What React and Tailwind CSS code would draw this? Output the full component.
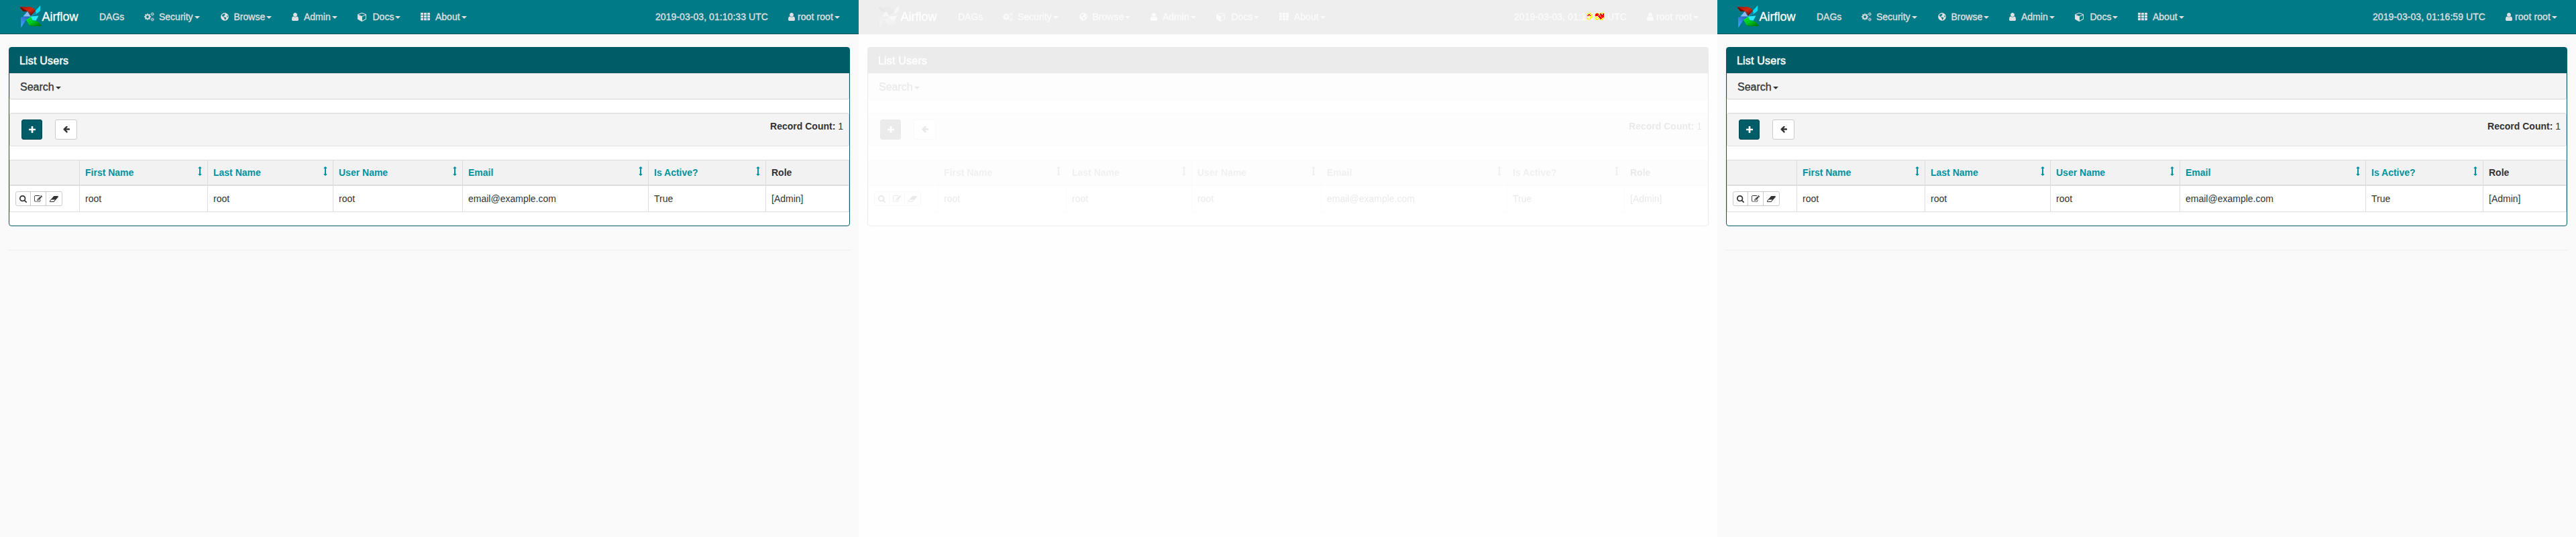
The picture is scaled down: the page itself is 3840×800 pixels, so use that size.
import React from 'react';
import { FaGlobeAmericas } from 'react-icons/fa';

const PATHS = {
  user: 'M1536 1399q0 109-62.5 187t-150.5 78h-854q-88 0-150.5-78t-62.5-187q0-85 8.5-160.5t31.5-152 58.5-131 94-89 134.5-34.5q131 128 313 128t313-128q76 0 134.5 34.5t94 89 58.5 131 31.5 152 8.5 160.5zm-256-887q0 159-112.5 271.5t-271.5 112.5-271.5-112.5-112.5-271.5 112.5-271.5 271.5-112.5 271.5 112.5 112.5 271.5z',
  plus: 'M1600 736v192q0 40-28 68t-68 28h-416v416q0 40-28 68t-68 28h-192q-40 0-68-28t-28-68v-416h-416q-40 0-68-28t-28-68v-192q0-40 28-68t68-28h416v-416q0-40 28-68t68-28h192q40 0 68 28t28 68v416h416q40 0 68 28t28 68z',
  left: 'M1664 896v128q0 53-32.5 90.5t-84.5 37.5h-704l293 294q38 36 38 90t-38 90l-75 76q-37 37-90 37-52 0-91-37l-651-652q-37-37-37-90 0-52 37-91l651-650q38-38 91-38 52 0 90 38l75 74q38 38 38 91t-38 91l-293 293h704q52 0 84.5 37.5t32.5 90.5z',
  search: 'M1216 832q0-185-131.5-316.5t-316.5-131.5-316.5 131.5-131.5 316.5 131.5 316.5 316.5 131.5 316.5-131.5 131.5-316.5zm512 832q0 52-38 90t-90 38q-54 0-90-38l-343-342q-179 124-399 124-143 0-273.5-55.5t-225-150-150-225-55.5-273.5 55.5-273.5 150-225 225-150 273.5-55.5 273.5 55.5 225 150 150 225 55.5 273.5q0 220-124 399l343 343q37 37 37 90z',
  edit: 'M888 1184l116-116-152-152-116 116v56h96v96h56zm440-720q-16-16-33 1l-350 350q-17 17-1 33t33-1l350-350q17-17 1-33zm80 594v190q0 119-84.5 203.5t-203.5 84.5h-832q-119 0-203.5-84.5t-84.5-203.5v-832q0-119 84.5-203.5t203.5-84.5h832q63 0 117 25 15 7 18 23 3 17-9 29l-49 49q-14 14-32 8-23-6-45-6h-832q-66 0-113 47t-47 113v832q0 66 47 113t113 47h832q66 0 113-47t47-113v-126q0-13 9-22l64-64q15-15 35-7t20 29zm-96-738l288 288-672 672h-288v-288zm444 132l-92 92-288-288 92-92q28-28 68-28t68 28l152 152q28 28 28 68t-28 68z',
  eraser: 'M832 1408l336-384h-768l-336 384h768zm1013-1077q15 34 9.5 71.5t-30.5 65.5l-896 1024q-38 44-96 44h-768q-38 0-69.5-20.5t-47.5-54.5q-15-34-9.5-71.5t30.5-65.5l896-1024q38-44 96-44h768q38 0 69.5 20.5t47.5 54.5z',
  cube: 'M896 1629l640-349v-636l-640 233v752zm-64-865l698-254-698-254-698 254 698 254zm832-252v768q0 35-18 65t-49 47l-704 384q-28 16-61 16t-61-16l-704-384q-31-17-49-47t-18-65v-768q0-40 23-73t61-47l704-256q22-8 44-8t44 8l704 256q38 14 61 47t23 73z',
  updown: 'M1216 320q0 26-19 45t-45 19h-128v1024h128q26 0 45 19t19 45-19 45l-256 256q-19 19-45 19t-45-19l-256-256q-19-19-19-45t19-45 45-19h128v-1024h-128q-26 0-45-19t-19-45 19-45l256-256q19-19 45-19t45 19l256 256q19 19 19 45z',
};

function Glyph({ name, box, className }) {
  return (
    <svg viewBox={box} className={`shrink-0 ${className}`} fill="currentColor">
      <path d={PATHS[name]} />
    </svg>
  );
}

function Caret({ className = '' }) {
  return (
    <span
      className={`inline-block h-0 w-0 border-x-4 border-t-4 border-x-transparent border-t-current ${className}`}
    />
  );
}

function GridIcon() {
  return (
    <svg viewBox="0 0 14 12" className="h-3 w-3.5" fill="currentColor">
      {[0, 4, 8].map((y) =>
        [0, 5, 10].map((x) => <rect key={`${x}-${y}`} x={x} y={y} width="4" height="3.2" rx="0.5" />)
      )}
    </svg>
  );
}

/* One large gear with two small ones to its right; teeth are a dashed ring. */
function CogsIcon() {
  return (
    <svg viewBox="0 0 15 14" className="h-3.5 w-[15px]" fill="none" stroke="currentColor">
      <circle cx="5" cy="7" r="2.9" strokeWidth="1.9" />
      <circle cx="5" cy="7" r="4.3" strokeWidth="1.3" pathLength="16" strokeDasharray="1 1" strokeDashoffset="0.5" />
      <circle cx="12.2" cy="3" r="1.4" strokeWidth="0.9" />
      <circle cx="12.2" cy="3" r="2.2" strokeWidth="0.9" pathLength="12" strokeDasharray="1 1" strokeDashoffset="0.5" />
      <circle cx="12.2" cy="11" r="1.4" strokeWidth="0.9" />
      <circle cx="12.2" cy="11" r="2.2" strokeWidth="0.9" pathLength="12" strokeDasharray="1 1" strokeDashoffset="0.5" />
    </svg>
  );
}

function Pinwheel({ id }) {
  return (
    <svg viewBox="0 0 34 34" className="h-[34px] w-[34px] shrink-0">
      <defs>
        <linearGradient id={`${id}-red`} x1="0" y1="0" x2="1" y2="1">
          <stop offset="0" stopColor="#a01208" />
          <stop offset="0.5" stopColor="#d42a10" />
          <stop offset="1" stopColor="#3a0c08" />
        </linearGradient>
        <linearGradient id={`${id}-green`} x1="0" y1="0" x2="1" y2="1">
          <stop offset="0" stopColor="#00ef3c" />
          <stop offset="0.5" stopColor="#00c41c" />
          <stop offset="1" stopColor="#006a08" />
        </linearGradient>
        <linearGradient id={`${id}-blue`} x1="0" y1="1" x2="0.6" y2="0">
          <stop offset="0" stopColor="#3fb0ff" />
          <stop offset="1" stopColor="#2f63c8" />
        </linearGradient>
      </defs>
      <path d="M31.2 0V8L25 13 16.5 16.5 23.5 8.5Z" fill="#00dcf4" />
      <path d="M24 8.5 25 13 16.5 16.5Z" fill="#0a86a4" />
      <path d="M0.3 2.3H15.5Q22 3 24 8.5L17 15.5 12.5 9H5.5Z" fill={`url(#${id}-red)`} />
      <path d="M0.3 2.3 12.5 9H5.5Z" fill="#6e0a06" />
      <path d="M16.5 16.5 28.5 15.5 24.5 22.8 18 22Z" fill="#2ce8ff" />
      <path d="M16.5 16.5 10 21.5 14.5 29.5 19.5 31H33L28.5 24.5 20 22.5Z" fill={`url(#${id}-green)`} />
      <path d="M14.5 29.5 33 31H17Z" fill="#00860a" />
      <path d="M2 17.5 16.5 16.5 10 21.5 2.3 33.2Z" fill={`url(#${id}-blue)`} />
      <path d="M5.5 16.5 12 9 16.5 16.5Z" fill="#8fb8f6" />
    </svg>
  );
}

const NAV = [
  { label: 'DAGs', width: 'w-[66.5px]' },
  { label: 'Security', width: 'w-[114px]', slot: 'w-[22.5px]', icon: <CogsIcon /> },
  { label: 'Browse', width: 'w-[106.5px]', slot: 'w-[20px]', icon: <FaGlobeAmericas className="h-3 w-3" /> },
  {
    label: 'Admin',
    width: 'w-[98px]',
    slot: 'w-[18px]',
    icon: <Glyph name="user" box="256 128 1280 1536" className="h-3 w-2.5" />,
  },
  {
    label: 'Docs',
    width: 'w-[94px]',
    slot: 'w-[22.5px]',
    icon: <Glyph name="cube" box="0 0 1664 1792" className="h-3.5 w-[13px]" />,
  },
  { label: 'About', width: 'w-[80px]', slot: 'w-[22px]', icon: <GridIcon /> },
];

function Navbar({ id, time }) {
  return (
    <nav className="flex h-[51px] items-center border-b border-[#004f58] bg-[#007a87] pr-7 pl-[29px] text-sm leading-5 text-[#e0e0e0] [-webkit-text-stroke:0.3px]">
      <div className="flex w-[119px] items-center">
        <Pinwheel id={id} />
        <span className="-ml-[0.5px] text-lg leading-5 text-white">Airflow</span>
      </div>
      {NAV.map((item) => (
        <div key={item.label} className={`flex items-center ${item.width}`}>
          {item.icon && <span className={`flex ${item.slot}`}>{item.icon}</span>}
          <span>{item.label}</span>
          {item.icon && <Caret className="mt-0.5 ml-0.5" />}
        </div>
      ))}
      <span className="ml-auto tracking-[0.06px]">{time}</span>
      <div className="ml-[30px] flex items-center">
        <Glyph name="user" box="256 128 1280 1536" className="mr-1 h-3 w-2.5" />
        <span className="tracking-[0.1px]">root root</span>
        <Caret className="mt-0.5 ml-0.5" />
      </div>
    </nav>
  );
}

const COLUMNS = [
  { label: 'First Name', value: 'root', sortable: true },
  { label: 'Last Name', value: 'root', sortable: true },
  { label: 'User Name', value: 'root', sortable: true },
  { label: 'Email', value: 'email@example.com', sortable: true },
  { label: 'Is Active?', value: 'True', sortable: true },
  { label: 'Role', value: '[Admin]', sortable: false },
];

function UsersTable() {
  return (
    <div className="mt-5 border-r border-[#ddd]">
      <div className="grid h-[39px] grid-cols-[104px_191px_187px_193px_277px_175px_1fr] border-t border-b-2 border-[#ddd] bg-[#f2f2f2] font-bold">
        <div className="border-l border-[#ddd]" />
        {COLUMNS.map((c) => (
          <div key={c.label} className="flex items-center justify-between border-l border-[#ddd] pr-2 pl-2">
            <span className={c.sortable ? 'text-[#0092a0]' : ''}>{c.label}</span>
            {c.sortable && (
              <Glyph name="updown" box="512 0 768 1792" className="mb-[5px] h-3.5 w-1.5 text-[#0092a0]" />
            )}
          </div>
        ))}
      </div>
      <div className="grid h-[39px] grid-cols-[104px_191px_187px_193px_277px_175px_1fr] border-b border-[#ddd]">
        <div className="flex items-start border-l border-[#ddd] pt-2 pl-2">
          <div className="flex h-[22px] w-[70px] divide-x divide-[#ccc] rounded-[3px] border border-[#ccc] bg-white">
            <span className="flex w-[22px] items-center justify-center">
              <Glyph name="search" box="64 128 1664 1664" className="h-[11px] w-[11px]" />
            </span>
            <span className="flex w-[23px] items-center justify-center">
              <Glyph name="edit" box="0 128 1792 1536" className="h-[10.5px] w-3" />
            </span>
            <span className="flex flex-1 items-center justify-center">
              <Glyph name="eraser" box="0 256 1856 1280" className="h-[9px] w-[13px]" />
            </span>
          </div>
        </div>
        {COLUMNS.map((c) => (
          <div key={c.label} className="flex items-center border-l border-[#ddd] pb-px pl-2">
            {c.value}
          </div>
        ))}
      </div>
    </div>
  );
}

function UsersScreen({ id, time }) {
  return (
    <div className="h-[800px] w-[1280px] bg-[#fafafa] text-sm leading-5 text-[#333]">
      <Navbar id={id} time={time} />
      <div className="pt-[19px] pr-[13px] pl-[13px]">
        <section className="h-[267px] rounded border border-[#005c66] bg-white">
          <header className="flex h-[38px] items-center bg-[#005c66] pt-0.5 pl-[15px] text-base tracking-[0.2px] text-white [-webkit-text-stroke:0.5px]">
            List Users
          </header>
          <div className="flex h-[39px] items-center rounded-b-[3px] border border-[#e0e0e0] border-b-[#dadada] bg-[#f4f4f4] pt-0.5 pl-[15px] text-base shadow-[0_1px_1px_rgba(0,0,0,0.05)] [-webkit-text-stroke:0.3px]">
            Search
            <Caret className="mt-[3px] ml-0.5" />
          </div>
          <div className="mt-5 flex h-[50px] items-start rounded-[3px] border border-[#e0e0e0] bg-[#f4f4f4] pt-[9px] pr-2 pl-[17px] shadow-[inset_0_1px_1px_rgba(0,0,0,0.05)]">
            <span className="flex h-[30px] w-[31px] items-center justify-center rounded-[3px] border border-[#004850] bg-[#005c66] pb-px text-white">
              <Glyph name="plus" box="192 128 1408 1408" className="h-2.5 w-2.5" />
            </span>
            <span className="ml-[19px] flex h-[30px] w-[33px] items-center justify-center rounded-[3px] border border-[#ccc] bg-white">
              <Glyph name="left" box="128 256 1536 1536" className="h-2.5 w-2.5" />
            </span>
            <span className="ml-auto">
              <b>Record Count:</b> 1
            </span>
          </div>
          <UsersTable />
        </section>
        <hr className="mt-[35px] border-t border-[#eee]" />
      </div>
    </div>
  );
}

const DIFF_MINUTES = [
  '..YYYY..',
  '.Y...YY.',
  'YY.RR.YY',
  'Y.RRRR.Y',
  'YRR..R.Y',
  'Y..YY.YY',
  'Y.Y..Y.Y',
  'Y.Y..Y.Y',
  'YYY..YY.',
  '.YY.YY..',
  '...YY...',
];

const DIFF_SECONDS = [
  '..YYY...YYYY.Y.',
  '.YRRRR.YRR..RRY',
  'YRRRRR.YRRR.RRY',
  'YRRRRRRYRRRRRRY',
  'YRRRR.RRYRRRRRY',
  '.YY..RRRYRRRRRY',
  'YY.YY.RRRR.RRRY',
  'Y.YY..YRRRRR.YY',
  'YYY..YYYRRR.YY.',
  '.YYYYYY.RYYYY..',
  '..YYY...YYYY...',
];

function DiffPixels({ rows, className }) {
  return (
    <svg
      viewBox={`0 0 ${rows[0].length} ${rows.length}`}
      className={`absolute top-[19px] bg-[#f6f6f6] ${className}`}
      shapeRendering="crispEdges"
    >
      {rows.flatMap((row, y) =>
        row.split('').map((p, x) =>
          p === '.' ? null : (
            <rect key={`${x}-${y}`} x={x} y={y} width="1" height="1" fill={p === 'Y' ? '#ffff00' : '#ff0000'} />
          )
        )
      )}
    </svg>
  );
}

export default function App() {
  return (
    <main className="flex h-[800px] w-[3840px] overflow-hidden font-['Liberation_Sans',Arial,sans-serif]">
      <UsersScreen id="before" time="2019-03-03, 01:10:33 UTC" />
      <div className="relative h-[800px] w-[1280px] bg-white">
        <div className="opacity-10 grayscale">
          <UsersScreen id="diff" time="2019-03-03, 01:10:33 UTC" />
        </div>
        <DiffPixels rows={DIFF_MINUTES} className="left-[1085px] h-[11px] w-2" />
        <DiffPixels rows={DIFF_SECONDS} className="left-[1097px] h-[11px] w-[15px]" />
      </div>
      <UsersScreen id="after" time="2019-03-03, 01:16:59 UTC" />
    </main>
  );
}
